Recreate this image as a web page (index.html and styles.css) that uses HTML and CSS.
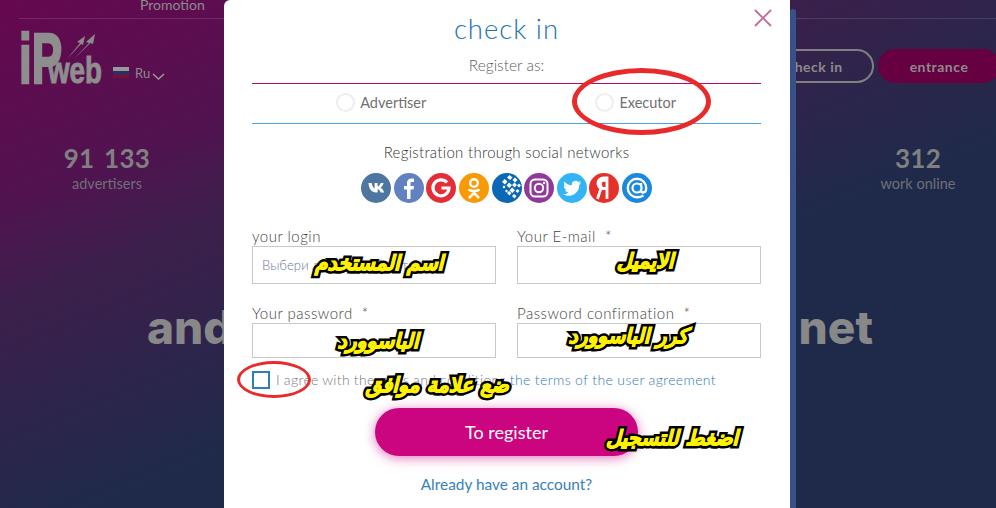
FILE: index.html
```html
<!DOCTYPE html>
<html lang="en">
<head>
<meta charset="utf-8">
<title>IPweb — check in</title>
<link rel="stylesheet" href="styles.css">
</head>
<body>
<div class="page">
  <nav class="topnav"><span class="topnav-link">Promotion</span></nav>
  <header class="header">
    <div class="brand">
      <div class="logo">
        <span class="logo-ip">iP</span><span class="logo-web">web</span>
        <svg class="logo-arrows" viewBox="0 0 30 26"><path d="M1 25 L14 9 L11 8 L19 2 L17 11 L15 10 Z M8 25 L23 9 L20 8 L29 0 L27 10 L24.500 9 Z" fill="#8a8a8a"/></svg>
      </div>
      <svg class="flag" viewBox="0 0 16 11"><rect width="16" height="4" fill="#999"/><rect y="4" width="16" height="4" fill="#2b2f66"/><rect y="8" width="16" height="3" fill="#7a1030"/></svg>
      <span class="lang">Ru</span>
      <svg class="chev" viewBox="0 0 13 7"><path d="M1 1 L6.500 6 L12 1" fill="none" stroke="#999" stroke-width="1.500"/></svg>
    </div>
    <div class="auth">
      <a class="pill pill-outline">check in</a>
      <a class="pill pill-solid">entrance</a>
    </div>
  </header>
  <section class="stats">
    <div class="stat"><div class="stat-num">91 133</div><div class="stat-label">advertisers</div></div>
    <div class="stat stat-right"><div class="stat-num">312</div><div class="stat-label">work online</div></div>
  </section>
  <div class="headline"><span>and</span><span>net</span></div>
</div>

<div class="scrollbar"></div>
<main class="modal">
  <svg class="close" viewBox="0 0 18 18"><path d="M1 1 L17 17 M17 1 L1 17" stroke="#c26a9f" stroke-width="1.800" fill="none"/></svg>
  <h1 class="title">check in</h1>
  <p class="subtitle">Register as:</p>
  <div class="roles">
    <label class="role"><span class="radio"></span>Advertiser</label>
    <label class="role"><span class="radio"></span>Executor</label>
  </div>
  <p class="social-title">Registration through social networks</p>
  <div class="social">
    <svg class="soc" viewBox="0 0 30 30"><circle cx="15" cy="15" r="15" fill="#4d76a1"/><path d="M5 10.500h3.200c.3 2.800 1.700 5 2.900 5.500v-5.500h3v3.600c1.200-.2 2.500-1.700 3-3.600h3c-.5 2.300-2 4-3.100 4.700 1.200.6 2.900 2.100 3.600 4.800h-3.300c-.6-1.800-2-3-3.200-3.200v3.200h-.7C8.500 20.500 5.300 16.500 5 10.500Z" fill="#fff" transform="translate(2.500 -.5)"/></svg>
    <svg class="soc" viewBox="0 0 30 30"><circle cx="15" cy="15" r="15" fill="#6281c0"/><path d="M16.500 26V16.500h3l.5-3.500h-3.500v-2.200c0-1 .3-1.700 1.800-1.700H20V5.800c-.4-.1-1.400-.2-2.600-.2-2.600 0-4.400 1.600-4.400 4.500V13h-3v3.500h3V26Z" fill="#fff"/></svg>
    <svg class="soc" viewBox="0 0 30 30"><circle cx="15" cy="15" r="15" fill="#e52d38"/><path d="M21 9.500A8 8 0 1 0 23 15h-7.500" fill="none" stroke="#fff" stroke-width="3.200"/></svg>
    <svg class="soc" viewBox="0 0 30 30"><circle cx="15" cy="15" r="15" fill="#f89a05"/><circle cx="15" cy="10" r="3.800" fill="none" stroke="#fff" stroke-width="2.400"/><path d="M9.500 16.500c3 2.200 8 2.200 11 0M15 18.500v1.500M10 25l5-5 5 5" fill="none" stroke="#fff" stroke-width="2.600"/></svg>
    <svg class="soc" viewBox="0 0 30 30"><circle cx="15" cy="15" r="15" fill="#0a68b4"/><g fill="#fff"><path d="M10 9l2.500-3 3 2.500-2.500 3zM15 4.500l2.500-2.500 3 2.500-2.500 2.500zM20.500 7l2.500-2.500 2.500 2.500-2.500 2.500zM14.500 12.500l2.500-3 3 2.500-2.500 3zM20 12l2.500-2.500 2.500 2.500-2.500 2.500zM25 12.500l2-2 2 2-2 2zM17.500 17.500l2.500-3 3 2.500-2.500 3zM23.500 18l2-2 2 2-2 2zM15 20l2-2 2.500 2-2 2.500zM20 23l2-2 2.500 2-2 2.500z"/><path d="M10.500 14l1.500-1.500 1.500 1.500-1.500 1.500zM13 18l1.500-1.500 1.500 1.500-1.500 1.500z"/></g></svg>
    <svg class="soc" viewBox="0 0 30 30"><circle cx="15" cy="15" r="15" fill="#90399b"/><rect x="6.500" y="6.500" width="17" height="17" rx="4.500" fill="none" stroke="#fff" stroke-width="2"/><circle cx="15" cy="15" r="4.200" fill="none" stroke="#fff" stroke-width="2"/><circle cx="20" cy="10" r="1.200" fill="#fff"/></svg>
    <svg class="soc" viewBox="0 0 30 30"><circle cx="15" cy="15" r="15" fill="#33b5f5"/><path d="M24 9.500c-.7.3-1.400.5-2.100.6.800-.5 1.300-1.200 1.600-2-.7.4-1.500.7-2.300.9a3.700 3.700 0 0 0-6.300 3.400c-3-.1-5.700-1.600-7.500-3.800-1 1.700-.5 3.800 1.100 4.900-.6 0-1.200-.2-1.700-.4 0 1.800 1.300 3.300 3 3.700-.5.100-1.100.2-1.700.1.500 1.500 1.900 2.500 3.400 2.600-1.600 1.200-3.500 1.800-5.500 1.600 5 3.200 11.600 1.900 14.500-3 1.200-2 1.800-4 1.700-6.200.7-.6 1.300-1.300 1.800-2.400Z" fill="#fff"/></svg>
    <svg class="soc" viewBox="0 0 30 30"><circle cx="15" cy="15" r="15" fill="#e5312a"/><path d="M18 26V5h-3.500c-3.300 0-5.500 2-5.500 5.200 0 2.500 1 4 3 5L8.500 26M18 15.500h-3.500c-2 0-3-2.300-3-5.200 0-2 1.200-3 3-3H18" fill="none" stroke="#fff" stroke-width="2.800"/></svg>
    <svg class="soc" viewBox="0 0 30 30"><circle cx="15" cy="15" r="15" fill="#1b88dc"/><path d="M21.500 22.500c-1.800 1.100-4.200 1.700-6.500 1.700A9.200 9.200 0 1 1 24.200 15c0 2.700-1.200 4.500-3 4.500-1.400 0-2.200-1-2.200-2.300V10" fill="none" stroke="#fff" stroke-width="2.400"/><circle cx="15" cy="15" r="4.500" fill="#1b88dc" stroke="#fff" stroke-width="2.200"/></svg>
  </div>
  <form class="form">
    <div class="field">
      <label class="field-label">your login</label>
      <input class="input input-tall" placeholder="Выбери логин (необязательно)">
    </div>
    <div class="field">
      <label class="field-label">Your E-mail &nbsp;*</label>
      <input class="input input-tall">
    </div>
    <div class="field">
      <label class="field-label">Your password &nbsp;*</label>
      <input class="input">
    </div>
    <div class="field">
      <label class="field-label">Password confirmation &nbsp;*</label>
      <input class="input">
    </div>
  </form>
  <div class="agree">
    <span class="check"></span>
    <span class="agree-text">I agree with the rules and conditions <a class="agree-link">the terms of the user agreement</a></span>
  </div>
  <button class="submit" type="button">To register</button>
  <a class="have">Already have an account?</a>
</main>

<div class="ring ring-executor"></div>
<div class="ring ring-check"></div>
<span class="note note-login" dir="rtl" data-t="اسم المستخدم">اسم المستخدم</span>
<span class="note note-email" dir="rtl" data-t="الايميل">الايميل</span>
<span class="note note-pass" dir="rtl" data-t="الباسوورد">الباسوورد</span>
<span class="note note-confirm" dir="rtl" data-t="كرر الباسوورد">كرر الباسوورد</span>
<span class="note note-agree" dir="rtl" data-t="ضع علامة موافق">ضع علامة موافق</span>
<span class="note note-submit" dir="rtl" data-t="اضغط للتسجيل">اضغط للتسجيل</span>
</body>
</html>
```
FILE: styles.css
```css
* { box-sizing: border-box; }
html, body { margin: 0; height: 508px; overflow: hidden; }
body { position: relative; font-family: "Lato", "Liberation Sans", sans-serif; background: #1f2a4a; }

.page {
  height: 508px;
  overflow: hidden;
  background: linear-gradient(158deg, #660850 0%, #521250 22%, #3d1f4c 33%, #1f2a4a 60%, #1f2a4a 100%);
  color: #8c8c8c;
}
.topnav {
  height: 19px;
  margin-left: 19px;
  border-bottom: 1px solid rgba(255,255,255,.12);
  padding-left: 121px;
  line-height: 9px;
  font-size: 14px;
}
.header {
  display: flex;
  justify-content: space-between;
  padding: 15px 0 0 19px;
  height: 122px;
}
.brand { display: flex; align-items: flex-end; height: 50px; }
.logo { position: relative; display: flex; align-items: flex-end; width: 83px; height: 50px; margin-right: 11px; color: #8e8e8e; font-family: "Liberation Sans", sans-serif; font-weight: 700; white-space: nowrap; }
.logo-ip { display: block; width: 29px; flex: none; font-size: 70px; line-height: 50px; height: 50px; transform: scaleX(.65); transform-origin: left bottom; -webkit-text-stroke: 2.500px #8e8e8e; }
.logo-web { display: block; flex: none; font-size: 37px; line-height: 27px; height: 27px; transform: scaleX(.75); transform-origin: left bottom; -webkit-text-stroke: 1px #8e8e8e; }
.logo-arrows { position: absolute; left: 47px; top: 0; width: 30px; height: 26px; }
.flag { width: 16px; height: 11px; margin: 0 6px 6px 0; }
.lang { font-size: 13px; line-height: 20px; margin-bottom: 1px; color: #8c8c8c; }
.chev { width: 13px; height: 7px; margin: 0 0 4px 2px; }
.auth { display: flex; gap: 4px; margin: 15px -4px 0 0; }
.pill { display: flex; align-items: center; justify-content: center; height: 34px; border-radius: 17px; font-size: 14px; font-weight: 700; letter-spacing: .5px; color: #8c8c8c; }
.pill-outline { width: 118px; border: 2px solid #808080; }
.pill-solid { width: 122px; background: #660040; }
.stats { display: flex; justify-content: space-between; padding: 0 40px 0 63px; }
.stat { text-align: center; width: 88px; }
.stat-right { width: 76px; }
.stat-num { font-size: 26px; line-height: 34px; font-weight: 700; letter-spacing: .3px; word-spacing: 3px; white-space: nowrap; color: #808080; }
.stat-label { font-size: 14.500px; line-height: 18px; color: #707078; }
.headline { display: flex; justify-content: space-between; margin: 109px 0 0 147px; width: 726px; font-family: "Inter", "Lato", sans-serif; font-size: 46px; line-height: 50px; font-weight: 800; color: #888; }

.scrollbar { position: absolute; left: 790px; top: 9px; width: 6px; height: 499px; background: #3a5088; border-radius: 3px 3px 0 0; }
.modal {
  position: absolute;
  left: 224px;
  top: 0;
  width: 566px;
  height: 508px;
  padding: 12px 29px 0 28px;
  background: #fff;
  border-radius: 6px 0 0 0;
  display: flex;
  flex-direction: column;
  align-items: center;
  overflow: hidden;
}
.close { position: absolute; left: 530px; top: 9px; width: 18px; height: 18px; }
.title { margin: 0; font-size: 27.500px; line-height: 34px; font-weight: 300; letter-spacing: 1px; color: #2272b0; }
.subtitle { margin: 9px 0 0; font-size: 15.500px; line-height: 20px; font-weight: 300; color: #5f5f5f; }
.roles { display: grid; grid-template-columns: 1fr 1fr; width: 100%; height: 41px; margin-top: 8px; padding-bottom: 3px; border-top: 1px solid #b5096e; border-bottom: 1px solid #4aa3df; }
.role { display: flex; align-items: center; justify-content: center; gap: 5px; padding-left: 4px; font-size: 14.500px; color: #707070; }
.radio { width: 19px; height: 19px; border-radius: 50%; border: 2px solid #eee; }
.social-title { margin: 18px 0 0; font-size: 15px; line-height: 20px; font-weight: 300; letter-spacing: .3px; color: #333; }
.social { display: flex; gap: 2.600px; margin-top: 11px; }
.soc { width: 30px; height: 30px; display: block; }
.form { display: grid; grid-template-columns: 244px 244px; column-gap: 21px; row-gap: 20px; width: 100%; margin-top: 24px; }
.field { display: flex; flex-direction: column; }
.field-label { font-size: 15px; line-height: 19px; font-weight: 300; letter-spacing: .5px; color: #444; }
.input { width: 100%; height: 35px; padding: 0 9px; border: 1px solid #c8c8c8; border-radius: 0; font: 300 13.200px "Lato", sans-serif; background: #fff; outline: none; }
.input-tall { height: 38px; }
.input::placeholder { color: #6c7a99; opacity: 1; }
.agree { display: flex; align-items: center; gap: 6px; width: 100%; margin-top: 13px; height: 18px; }
.check { width: 18px; height: 18px; border: 2px solid #2e7fb8; flex: none; }
.agree-text { margin-bottom: 2px; font-size: 14px; font-weight: 300; letter-spacing: .37px; word-spacing: -.4px; color: #7a7a7a; white-space: nowrap; }
.agree-link { color: #3079b5; word-spacing: 0; }
.submit { width: 263px; height: 48px; margin-top: 19px; flex: none; border: 0; border-radius: 24px; background: #cb057f; color: #fff; font: 400 18px "Lato", sans-serif; box-shadow: 0 2px 12px rgba(203,5,127,.55); }
.have { margin-top: 18px; font-size: 15.400px; line-height: 20px; color: #3a80bb; }

.ring { position: absolute; border-radius: 50%; border: 5px solid #e82a2a; }
.ring-executor { left: 572px; top: 68px; width: 139px; height: 67px; }
.ring-check { left: 237px; top: 361px; width: 74px; height: 37px; border-width: 3px; }
.note {
  position: absolute;
  transform: translateX(-50%);
  font-family: "DejaVu Sans", sans-serif;
  font-weight: 700;
  font-style: italic;
  font-size: 20.500px;
  line-height: 24px;
  color: #fff200;
  white-space: nowrap;
  -webkit-text-stroke: 6px #000;
  paint-order: stroke fill;
}
.note::after {
  content: attr(data-t);
  position: absolute;
  inset: 0;
  -webkit-text-stroke: 1px #fff200;
}
.note-login { left: 379px; top: 251px; }
.note-email { left: 645px; top: 249px; }
.note-pass { left: 378px; top: 329px; }
.note-confirm { left: 628px; top: 324px; }
.note-agree { left: 437px; top: 373px; }
.note-submit { left: 672px; top: 426px; }
```
